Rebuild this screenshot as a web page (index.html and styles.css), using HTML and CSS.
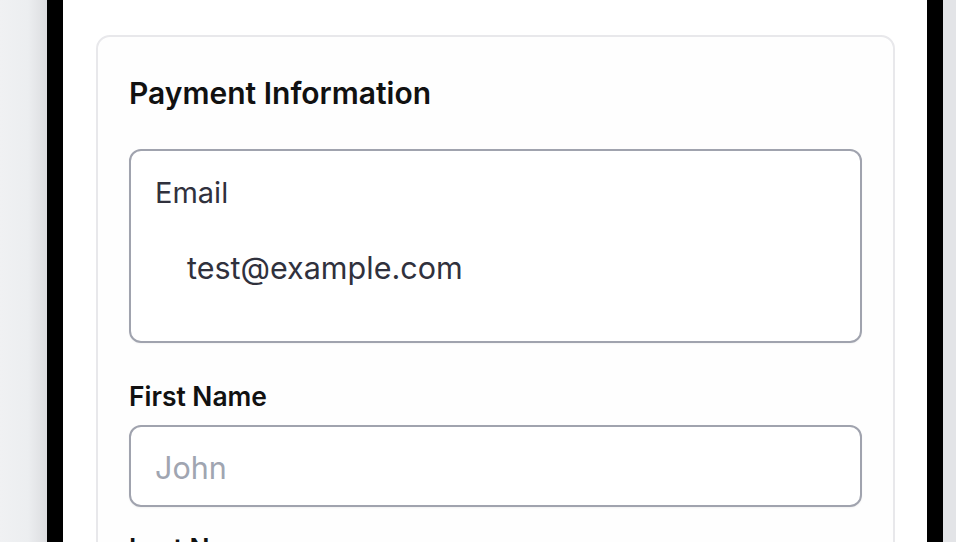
FILE: index.html
```html
<!DOCTYPE html>
<html lang="en">
<head>
<meta charset="utf-8">
<title>Payment Information</title>
<link rel="stylesheet" href="styles.css">
</head>
<body>
<div class="stage">
  <div class="frame">
    <section class="card">
      <h2 class="title">Payment Information</h2>
      <div class="link-box">
        <div class="link-label">Email</div>
        <div class="link-value">test@example.com</div>
      </div>
      <label class="field-label first">First Name</label>
      <div class="input"><span class="placeholder">John</span></div>
      <label class="field-label">Last Name</label>
      <div class="input"><span class="placeholder">Doe</span></div>
    </section>
  </div>
</div>
</body>
</html>
```
FILE: styles.css
```css
html, body {
  margin: 0;
  padding: 0;
  height: 100%;
  overflow: hidden;
}
body {
  background: #e4e5e8;
}
.stage {
  height: 542px;
  overflow: hidden;
  background: linear-gradient(to right, #f0f1f3 0px, #eceef0 28px, #dcdde0 47px, #e3e4e7 47px);
}
.frame {
  margin-left: 47px;
  width: 896px;
  height: 100%;
  box-sizing: border-box;
  border-left: 16px solid #000;
  border-right: 16px solid #000;
  background: #ffffff;
  padding: 35px 32px 0 33px;
}
.card {
  border: 2px solid #e8e8eb;
  border-radius: 14px;
  background: #fefefe;
  padding: 38px 31px 40px 31px;
}
.title {
  margin: 0;
  font-family: Inter, "Noto Sans", sans-serif;
  font-weight: 600;
  font-size: 30px;
  line-height: 36px;
  color: #111111;
}
.link-box {
  margin-top: 38px;
  height: 194px;
  box-sizing: border-box;
  border: 2px solid #a0a3ae;
  border-radius: 12px;
  background: #ffffff;
  padding: 26px 24px 0 24px;
  box-shadow: 0 1px 2px rgba(0,0,0,0.04);
}
.link-label {
  font-family: Inter, "Noto Sans", sans-serif;
  font-size: 29px;
  line-height: 32px;
  color: #30313d;
}
.link-value {
  margin-top: 43px;
  padding-left: 32px;
  font-family: Inter, "Noto Sans", sans-serif;
  font-size: 30.5px;
  line-height: 32px;
  color: #30313d;
}
.field-label {
  display: block;
  margin-top: 23px;
  font-family: Inter, "Noto Sans", sans-serif;
  font-weight: 600;
  font-size: 26.4px;
  line-height: 36px;
  color: #111111;
}
.field-label.first {
  margin-top: 35px;
}
.input {
  margin-top: 11px;
  height: 82px;
  box-sizing: border-box;
  border: 2px solid #a0a3ae;
  border-radius: 12px;
  background: #ffffff;
  padding: 2px 24px 0 24px;
  display: flex;
  align-items: center;
  box-shadow: 0 1px 2px rgba(0,0,0,0.05);
}
.placeholder {
  font-family: Inter, "Noto Sans", sans-serif;
  font-size: 30.5px;
  color: #a0a5b1;
}
```
